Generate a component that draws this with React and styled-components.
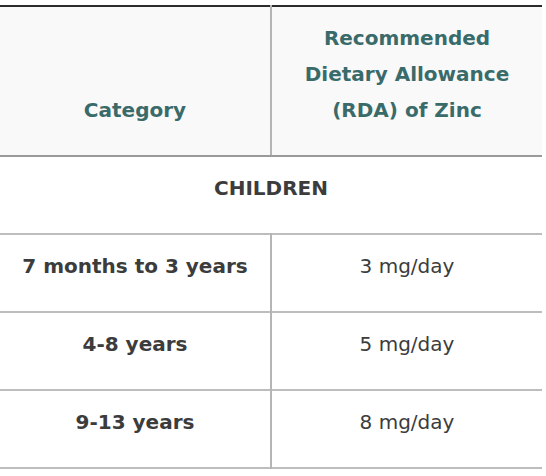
import React from 'react';
import styled, { createGlobalStyle } from 'styled-components';

const GlobalStyle = createGlobalStyle`
  body {
    margin: 0;
    background: #ffffff;
    font-family: 'DejaVu Sans', Verdana, sans-serif;
  }
`

const Wrapper = styled.div`
  padding-top: 5px;
  width: 542px;
`

const Table = styled.table`
  width: 100%;
  border-collapse: collapse;
  border-top: 2px solid #2b2b2b;
  font-size: 20px;
  line-height: 36px;
  color: #3c3c3c;
`

const HeadCell = styled.th`
  width: 50%;
  background: #f9f9f9;
  color: #3a6b6b;
  font-weight: bold;
  text-align: center;
  vertical-align: bottom;
  padding: 13px 10px 27px;
  border-bottom: 2px solid #9a9a9a;
  & + & {
    border-left: 2px solid #b5b5b5;
  }
`

const Row = styled.tr`
  border-bottom: 2px solid #bdbdbd;
`

const Cell = styled.td`
  text-align: center;
  vertical-align: top;
  padding: 13px 10px 27px;
  font-weight: ${p => (p.$bold ? 'bold' : 'normal')};
  & + & {
    border-left: 2px solid #b5b5b5;
  }
`

const rows = [
  ['7 months to 3 years', '3 mg/day'],
  ['4-8 years', '5 mg/day'],
  ['9-13 years', '8 mg/day'],
];

const App = () => {
  return (
    <Wrapper>
      <GlobalStyle />
      <Table>
        <thead>
          <tr>
            <HeadCell>Category</HeadCell>
            <HeadCell>
              Recommended
              <br />
              Dietary Allowance
              <br />
              (RDA) of Zinc
            </HeadCell>
          </tr>
        </thead>
        <tbody>
          <Row>
            <Cell colSpan={2} $bold>CHILDREN</Cell>
          </Row>
          {rows.map(([cat, rda]) => (
            <Row key={cat}>
              <Cell $bold>{cat}</Cell>
              <Cell>{rda}</Cell>
            </Row>
          ))}
        </tbody>
      </Table>
    </Wrapper>
  );
};

export default App;
